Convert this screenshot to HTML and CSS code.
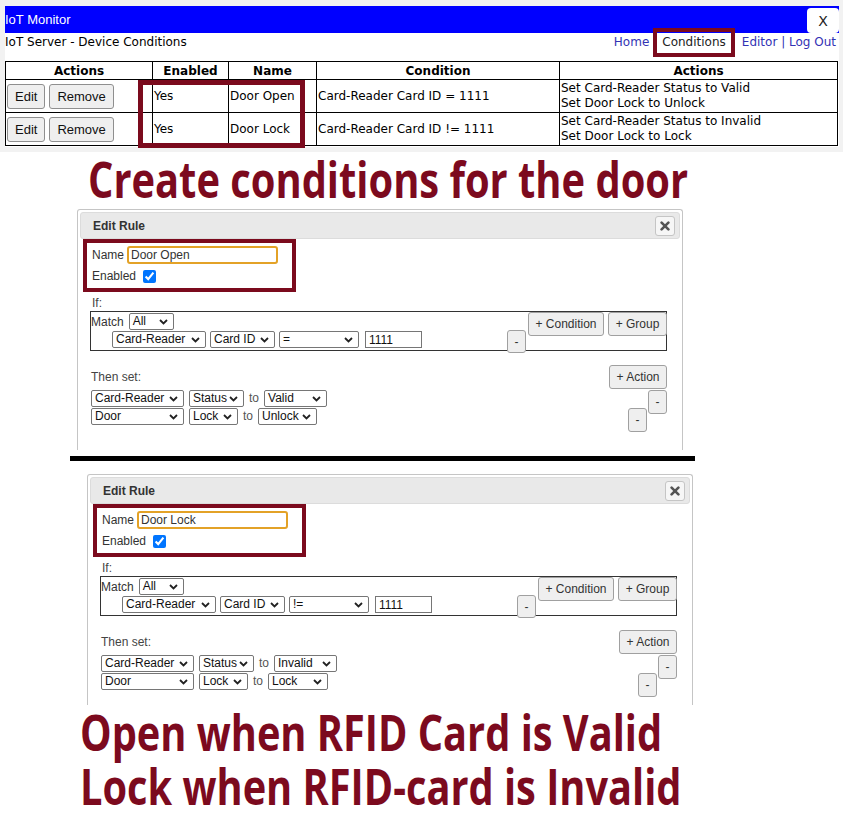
FILE: index.html
```html
<!DOCTYPE html>
<html>
<head>
<meta charset="utf-8">
<title>IoT Monitor - Conditions</title>
<link rel="stylesheet" href="styles.css">
</head>
<body>
<div class="shot">
  <div class="panel">
    <div class="bar"><span class="bar-title">IoT Monitor</span><span class="bar-x">X</span></div>
    <div class="sub">
      <span>IoT Server - Device Conditions</span>
      <nav class="nav"><a class="lnk home">Home</a><span class="cur">Conditions</span><a class="lnk">Editor | Log Out</a></nav>
    </div>
    <table class="rules">
      <colgroup><col class="c1"><col class="c2"><col class="c3"><col class="c4"><col class="c5"></colgroup>
      <tr><th>Actions</th><th>Enabled</th><th>Name</th><th>Condition</th><th>Actions</th></tr>
      <tr>
        <td><div class="btns"><button class="tbtn">Edit</button><button class="tbtn">Remove</button></div></td>
        <td>Yes</td><td>Door Open</td><td>Card-Reader Card ID = 1111</td>
        <td>Set Card-Reader Status to Valid<br>Set Door Lock to Unlock</td>
      </tr>
      <tr>
        <td><div class="btns"><button class="tbtn">Edit</button><button class="tbtn">Remove</button></div></td>
        <td>Yes</td><td>Door Lock</td><td>Card-Reader Card ID != 1111</td>
        <td>Set Card-Reader Status to Invalid<br>Set Door Lock to Lock</td>
      </tr>
    </table>
  </div>
  <div class="mark mark-nav"></div>
  <div class="mark mark-rows"></div>
</div>

<div class="caption"><span>Create conditions for the door</span></div>

<div class="dlg">
  <div class="dlg-title"><span>Edit Rule</span><span class="dlg-close"><svg width="10" height="10" viewBox="0 0 10 10"><path d="M1.6 1.6 L8.4 8.4 M8.4 1.6 L1.6 8.4" stroke="#555" stroke-width="2.6" stroke-linecap="round"/></svg></span></div>
  <div class="namebox">
    <div class="nrow"><span>Name</span><input class="name-in" type="text" value="Door Open"></div>
    <div class="nrow"><span>Enabled</span><input class="chk" type="checkbox" checked></div>
  </div>
  <div class="lbl if-lbl">If:</div>
  <div class="group">
    <div class="g-left">
      <div class="g-row1"><span>Match</span><span class="sel w-all">All<svg class="chev" width="9" height="6" viewBox="0 0 9 6"><path d="M1 1 L4.5 4.5 L8 1" fill="none" stroke="#222" stroke-width="1.8"/></svg></span></div>
      <div class="g-row2">
        <span class="sel w-dev">Card-Reader<svg class="chev" width="9" height="6" viewBox="0 0 9 6"><path d="M1 1 L4.5 4.5 L8 1" fill="none" stroke="#222" stroke-width="1.8"/></svg></span>
        <span class="sel w-cid">Card ID<svg class="chev" width="9" height="6" viewBox="0 0 9 6"><path d="M1 1 L4.5 4.5 L8 1" fill="none" stroke="#222" stroke-width="1.8"/></svg></span>
        <span class="sel w-op">=<svg class="chev" width="9" height="6" viewBox="0 0 9 6"><path d="M1 1 L4.5 4.5 L8 1" fill="none" stroke="#222" stroke-width="1.8"/></svg></span>
        <input class="val" type="text" value="1111">
      </div>
    </div>
    <button class="b g-minus">-</button>
    <button class="b g-add">+ Condition</button>
    <button class="b g-grp">+ Group</button>
  </div>
  <div class="acts">
    <div class="acts-head"><span class="lbl">Then set:</span><button class="b a-add">+ Action</button></div>
    <div class="a-row">
      <span class="sel w-dev2">Card-Reader<svg class="chev" width="9" height="6" viewBox="0 0 9 6"><path d="M1 1 L4.5 4.5 L8 1" fill="none" stroke="#222" stroke-width="1.8"/></svg></span>
      <span class="sel w-status">Status<svg class="chev" width="9" height="6" viewBox="0 0 9 6"><path d="M1 1 L4.5 4.5 L8 1" fill="none" stroke="#222" stroke-width="1.8"/></svg></span>
      <span class="to">to</span>
      <span class="sel w-valid">Valid<svg class="chev" width="9" height="6" viewBox="0 0 9 6"><path d="M1 1 L4.5 4.5 L8 1" fill="none" stroke="#222" stroke-width="1.8"/></svg></span>
      <button class="b a-minus a-minus1">-</button>
    </div>
    <div class="a-row">
      <span class="sel w-dev2">Door<svg class="chev" width="9" height="6" viewBox="0 0 9 6"><path d="M1 1 L4.5 4.5 L8 1" fill="none" stroke="#222" stroke-width="1.8"/></svg></span>
      <span class="sel w-lock">Lock<svg class="chev" width="9" height="6" viewBox="0 0 9 6"><path d="M1 1 L4.5 4.5 L8 1" fill="none" stroke="#222" stroke-width="1.8"/></svg></span>
      <span class="to">to</span>
      <span class="sel w-unlock">Unlock<svg class="chev" width="9" height="6" viewBox="0 0 9 6"><path d="M1 1 L4.5 4.5 L8 1" fill="none" stroke="#222" stroke-width="1.8"/></svg></span>
      <button class="b a-minus a-minus2">-</button>
    </div>
  </div>
</div>

<div class="divider"></div>

<div class="dlg dlg2">
  <div class="dlg-title"><span>Edit Rule</span><span class="dlg-close"><svg width="10" height="10" viewBox="0 0 10 10"><path d="M1.6 1.6 L8.4 8.4 M8.4 1.6 L1.6 8.4" stroke="#555" stroke-width="2.6" stroke-linecap="round"/></svg></span></div>
  <div class="namebox">
    <div class="nrow"><span>Name</span><input class="name-in" type="text" value="Door Lock"></div>
    <div class="nrow"><span>Enabled</span><input class="chk" type="checkbox" checked></div>
  </div>
  <div class="lbl if-lbl">If:</div>
  <div class="group">
    <div class="g-left">
      <div class="g-row1"><span>Match</span><span class="sel w-all">All<svg class="chev" width="9" height="6" viewBox="0 0 9 6"><path d="M1 1 L4.5 4.5 L8 1" fill="none" stroke="#222" stroke-width="1.8"/></svg></span></div>
      <div class="g-row2">
        <span class="sel w-dev">Card-Reader<svg class="chev" width="9" height="6" viewBox="0 0 9 6"><path d="M1 1 L4.5 4.5 L8 1" fill="none" stroke="#222" stroke-width="1.8"/></svg></span>
        <span class="sel w-cid">Card ID<svg class="chev" width="9" height="6" viewBox="0 0 9 6"><path d="M1 1 L4.5 4.5 L8 1" fill="none" stroke="#222" stroke-width="1.8"/></svg></span>
        <span class="sel w-op">!=<svg class="chev" width="9" height="6" viewBox="0 0 9 6"><path d="M1 1 L4.5 4.5 L8 1" fill="none" stroke="#222" stroke-width="1.8"/></svg></span>
        <input class="val" type="text" value="1111">
      </div>
    </div>
    <button class="b g-minus">-</button>
    <button class="b g-add">+ Condition</button>
    <button class="b g-grp">+ Group</button>
  </div>
  <div class="acts">
    <div class="acts-head"><span class="lbl">Then set:</span><button class="b a-add">+ Action</button></div>
    <div class="a-row">
      <span class="sel w-dev2">Card-Reader<svg class="chev" width="9" height="6" viewBox="0 0 9 6"><path d="M1 1 L4.5 4.5 L8 1" fill="none" stroke="#222" stroke-width="1.8"/></svg></span>
      <span class="sel w-status">Status<svg class="chev" width="9" height="6" viewBox="0 0 9 6"><path d="M1 1 L4.5 4.5 L8 1" fill="none" stroke="#222" stroke-width="1.8"/></svg></span>
      <span class="to">to</span>
      <span class="sel w-valid">Invalid<svg class="chev" width="9" height="6" viewBox="0 0 9 6"><path d="M1 1 L4.5 4.5 L8 1" fill="none" stroke="#222" stroke-width="1.8"/></svg></span>
      <button class="b a-minus a-minus1">-</button>
    </div>
    <div class="a-row">
      <span class="sel w-dev2">Door<svg class="chev" width="9" height="6" viewBox="0 0 9 6"><path d="M1 1 L4.5 4.5 L8 1" fill="none" stroke="#222" stroke-width="1.8"/></svg></span>
      <span class="sel w-lock">Lock<svg class="chev" width="9" height="6" viewBox="0 0 9 6"><path d="M1 1 L4.5 4.5 L8 1" fill="none" stroke="#222" stroke-width="1.8"/></svg></span>
      <span class="to">to</span>
      <span class="sel w-lockv">Lock<svg class="chev" width="9" height="6" viewBox="0 0 9 6"><path d="M1 1 L4.5 4.5 L8 1" fill="none" stroke="#222" stroke-width="1.8"/></svg></span>
      <button class="b a-minus a-minus2">-</button>
    </div>
  </div>
</div>

<div class="note">
  <div class="note-line"><span>Open when RFID Card is Valid</span></div>
  <div class="note-line"><span>Lock when RFID-card is Invalid</span></div>
</div>
</body>
</html>
```

FILE: styles.css
```css
* { box-sizing: border-box; }
html { overflow: hidden; }
body {
  margin: 0;
  width: 843px;
  background: #fff;
  font-family: "Liberation Sans", Arial, sans-serif;
}

/* ---------- top screenshot ---------- */
.shot {
  position: relative;
  background: #f2f2f2;
  padding: 6px 4px 5px 5px;
  height: 152px;
}
.panel {
  background: #fff;
  width: 834px;
  height: 141px;
}
.bar {
  height: 27px;
  background: #0000ff;
  color: #fff;
  font-size: 13px;
  display: flex;
  justify-content: space-between;
  align-items: flex-start;
}
.bar-title { line-height: 27px; }
.bar-x {
  margin-top: 2px;
  width: 32px;
  height: 25px;
  background: #fff;
  border-radius: 4px;
  color: #222;
  font-family: "DejaVu Sans", Verdana, sans-serif;
  font-size: 14px;
  display: flex;
  align-items: center;
  justify-content: center;
}
.sub {
  height: 28px;
  display: flex;
  justify-content: space-between;
  align-items: flex-start;
  padding: 2px 3px 0 0;
  font-family: "DejaVu Sans", Verdana, sans-serif;
  font-size: 12px;
  line-height: 14px;
  color: #000;
}
.nav { display: flex; }
.lnk { color: #3232b4; }
.home { margin-right: 13px; }
.cur { color: #222; margin-right: 16px; }

.rules {
  border-collapse: collapse;
  table-layout: fixed;
  width: 832px;
  font-family: "DejaVu Sans", Verdana, sans-serif;
  font-size: 12px;
  color: #000;
}
.c1 { width: 147px; }
.c2 { width: 76px; }
.c3 { width: 88px; }
.c4 { width: 243px; }
.c5 { width: 278px; }
.rules th, .rules td {
  border: 1px solid #000;
  padding: 0 1px;
}
.rules th {
  height: 18px;
  line-height: 14px;
  font-weight: bold;
  text-align: center;
}
.rules td {
  height: 33px;
  line-height: 15px;
  vertical-align: middle;
  white-space: nowrap;
}
.btns { display: flex; gap: 4px; }
.tbtn {
  margin: 0;
  height: 25px;
  padding: 0 7px;
  font-family: "Liberation Sans", Arial, sans-serif;
  font-size: 13px;
  color: #111;
  background: #efefef;
  border: 1px solid #8f8f8f;
  border-radius: 3px;
}

.mark {
  position: absolute;
  border: 4px solid #7b0a1d;
}
.mark-nav { left: 653px; top: 28px; width: 82px; height: 29px; }
.mark-rows { left: 138px; top: 80px; width: 167px; height: 68px; border-width: 5px; }

/* ---------- big captions ---------- */
.caption, .note-line {
  font-family: "Open Sans", "Liberation Sans", sans-serif;
  font-weight: 700;
  font-size: 50px;
  color: #7c0a1e;
  white-space: nowrap;
}
.caption {
  margin: 2px 0 5px 88px;
  line-height: 50px;
  height: 50px;
  width: 620px;
}
.caption span, .note-line span {
  display: inline-block;
  transform-origin: 0 0;
}
.caption span { transform: scaleX(0.797); }
.note { margin-left: 80px; width: 620px; }
.note-line { line-height: 54px; height: 54px; }
.note-line span { transform: scaleX(0.795); }

/* ---------- dialogs ---------- */
.dlg {
  margin-left: 77px;
  width: 606px;
  height: 241px;
  border: 1px solid #c5c5c5;
  border-bottom: 0;
  border-radius: 3px 3px 0 0;
  padding: 2px 2px 0;
  font-size: 12px;
  color: #333;
}
.dlg2 {
  margin: 13px 0 0 87px;
  height: 231px;
}
.dlg-title {
  height: 27px;
  background: #e9e9e9;
  border: 1px solid #dcdcdc;
  border-radius: 3px;
  display: flex;
  align-items: center;
  justify-content: space-between;
  padding: 0 4px 0 12px;
  font-weight: bold;
  color: #333;
}
.dlg-close {
  width: 20px;
  height: 20px;
  background: #f6f6f6;
  border: 1px solid #c5c5c5;
  border-radius: 3px;
  display: flex;
  align-items: center;
  justify-content: center;
}
.namebox {
  margin-left: 3px;
  width: 213px;
  height: 53px;
  border: 4px solid #7b0a1d;
  padding: 3px 5px;
  display: flex;
  flex-direction: column;
  gap: 3px;
}
.nrow {
  height: 18px;
  display: flex;
  align-items: center;
  gap: 3px;
}
.name-in {
  width: 151px;
  height: 18px;
  margin: 0;
  padding: 0 2px;
  border: 2px solid #e3a227;
  border-radius: 3px;
  font-family: "Liberation Sans", Arial, sans-serif;
  font-size: 12px;
  color: #333;
  outline: none;
}
.chk {
  width: 13px;
  height: 13px;
  margin: 0 0 0 4px;
}
.lbl { color: #444; line-height: 14px; }
.if-lbl { margin: 4px 0 1px 12px; height: 14px; }

.group {
  margin-left: 10px;
  width: 577px;
  height: 40px;
  border: 1px solid #333;
  display: flex;
  align-items: flex-start;
}
.g-left { flex: 1; display: flex; flex-direction: column; }
.g-row1 {
  display: flex;
  align-items: center;
  gap: 5px;
  height: 18px;
  padding-top: 1px;
}
.g-row2 {
  display: flex;
  gap: 4px;
  margin-top: 1px;
  padding-left: 21px;
}
.sel {
  display: inline-flex;
  align-items: center;
  justify-content: space-between;
  height: 17px;
  padding: 0 5px 0 3px;
  font-size: 12px;
  line-height: 15px;
  color: #111;
  background: #fff;
  border: 1px solid #767676;
  border-radius: 2px;
  white-space: nowrap;
}
.chev { flex: none; margin-top: 1px; }
.w-all { width: 45px; }
.w-dev { width: 94px; }
.w-cid { width: 65px; }
.w-op { width: 80px; }
.w-dev2 { width: 93px; }
.w-status { width: 55px; }
.w-valid { width: 63px; }
.w-lock { width: 49px; }
.w-unlock { width: 59px; }
.w-lockv { width: 60px; }
.val {
  width: 57px;
  height: 17px;
  margin: 0 0 0 2px;
  padding: 0 3px;
  font-family: "Liberation Sans", Arial, sans-serif;
  font-size: 12px;
  color: #111;
  border: 1px solid #767676;
}
.b {
  margin: 0;
  padding: 0;
  height: 24px;
  font-family: "Liberation Sans", Arial, sans-serif;
  font-size: 12px;
  color: #333;
  background: #efefef;
  border: 1px solid #a0a0a0;
  border-radius: 3px;
}
.g-minus { width: 19px; height: 23px; margin-top: 18px; }
.g-add { width: 76px; margin-left: 2px; }
.g-grp { width: 59px; margin-left: 4px; margin-right: -1px; }

.acts { margin: 14px 0 0 11px; width: 576px; }
.acts-head {
  height: 24px;
  display: flex;
  align-items: center;
  justify-content: space-between;
}
.a-add { width: 58px; }
.a-row {
  height: 18px;
  margin-top: 1px;
  display: flex;
  align-items: flex-start;
  gap: 4px;
}
.a-row + .a-row { margin-top: 0; }
.a-row .w-dev2 { margin-right: 1px; }
.to { color: #555; line-height: 17px; padding: 0 1px; }
.a-minus {
  width: 19px;
  margin-left: auto;
  margin-bottom: -6px;
  position: relative;
}
.a-minus2 { margin-right: 20px; }

.divider {
  margin: 6px 0 0 70px;
  width: 625px;
  height: 5px;
  background: #000;
}
```
